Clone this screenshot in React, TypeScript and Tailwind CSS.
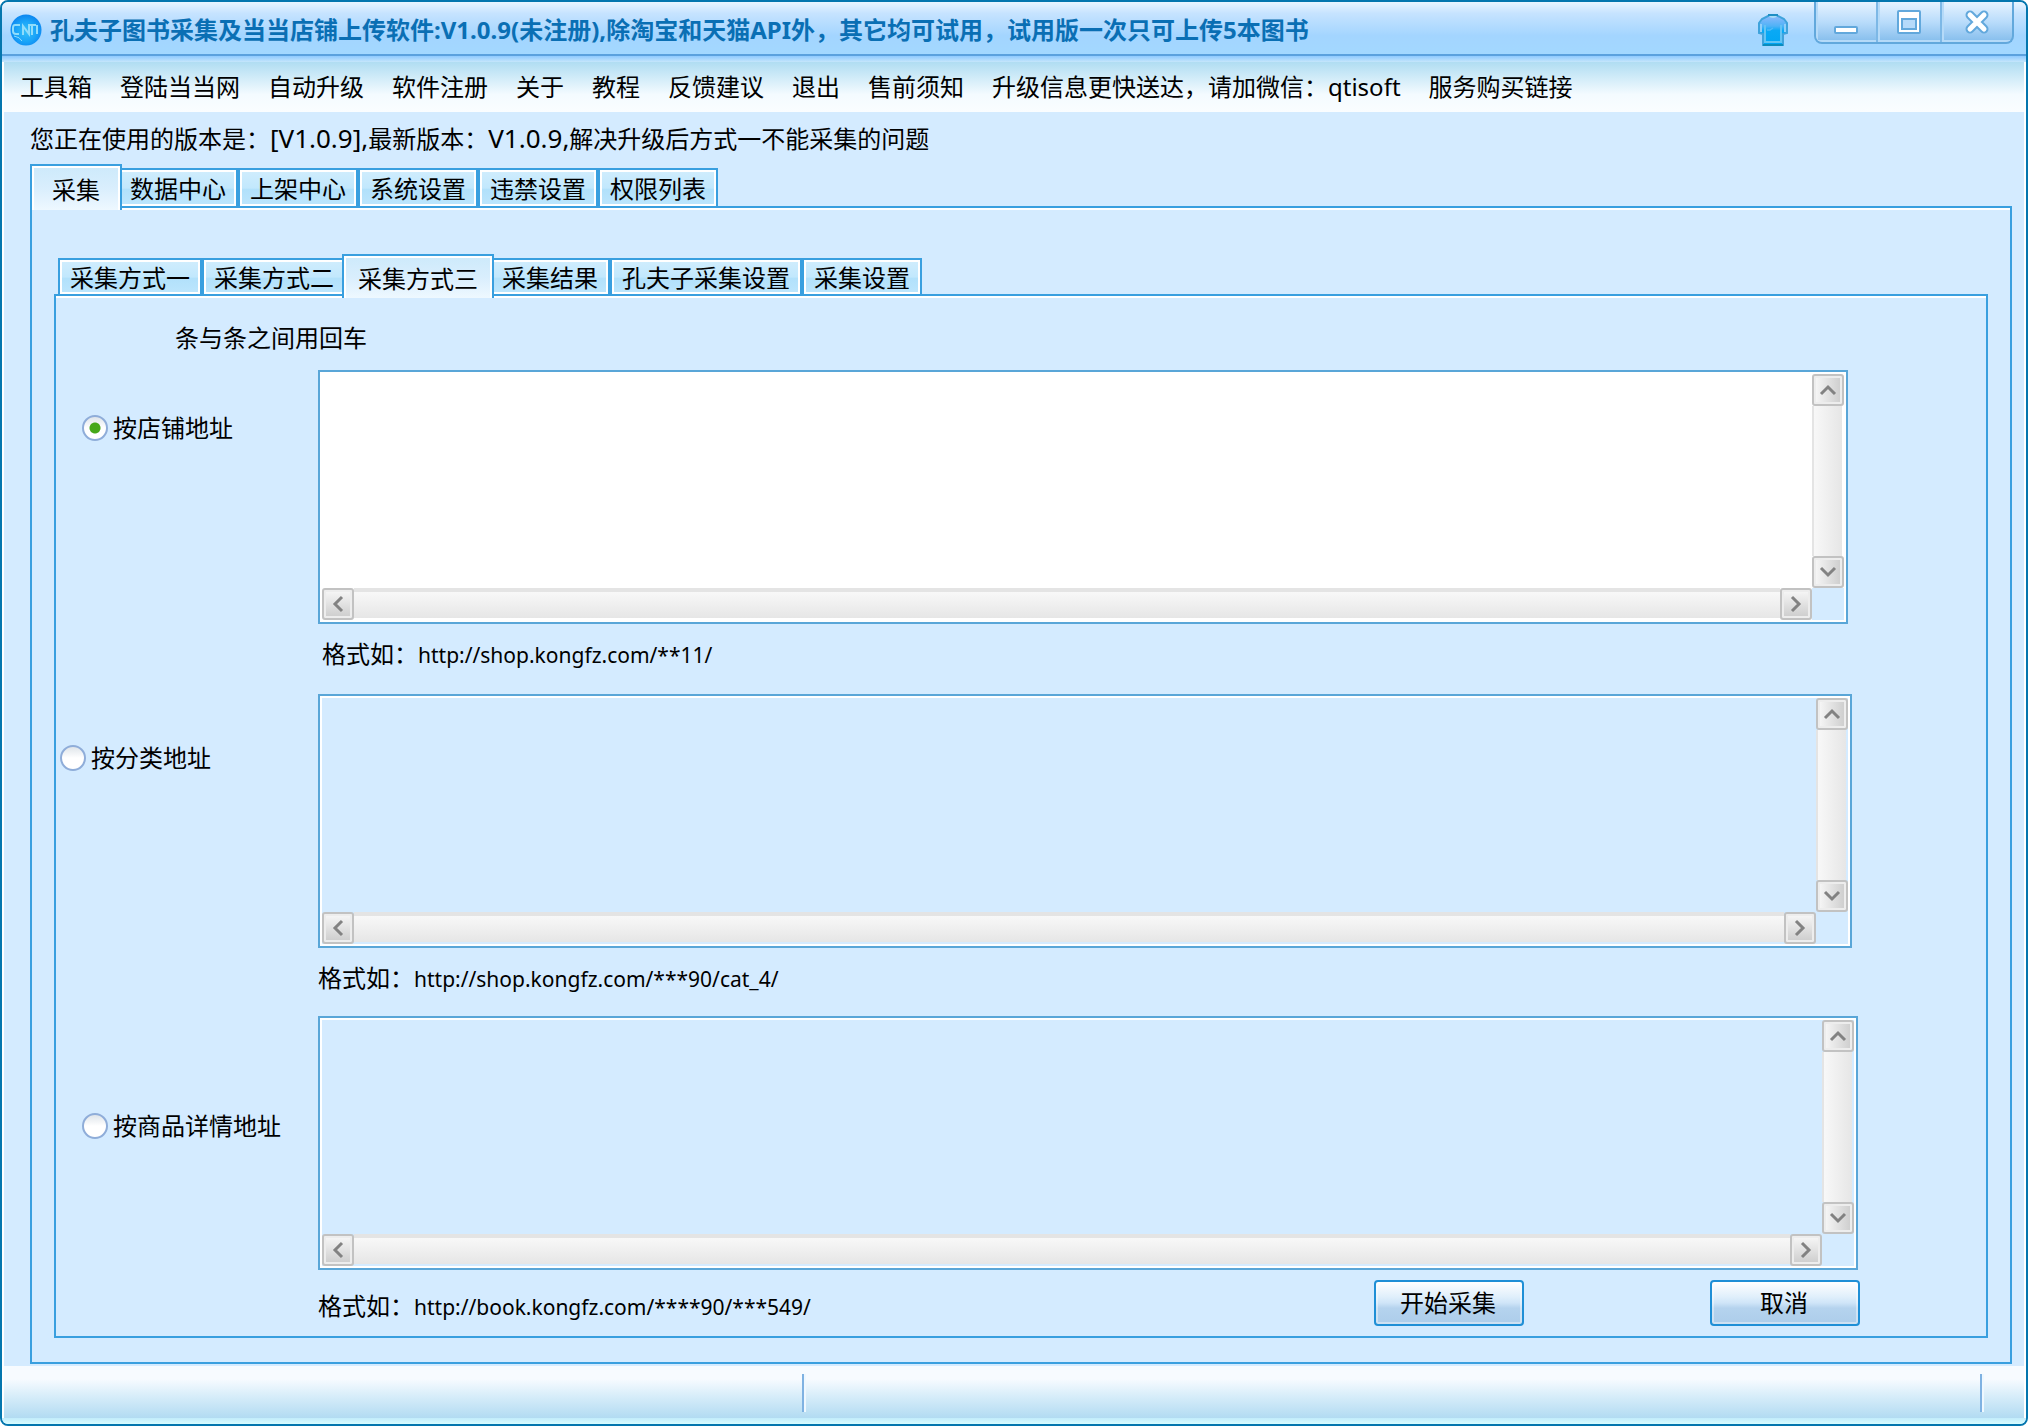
import React, { useState } from "react";

const cjk = "font-['Noto_Sans','Noto_Sans_CJK_SC',sans-serif]";

const menuItems = [
  "工具箱",
  "登陆当当网",
  "自动升级",
  "软件注册",
  "关于",
  "教程",
  "反馈建议",
  "退出",
  "售前须知",
  "升级信息更快送达，请加微信：qtisoft",
  "服务购买链接",
];

const mainTabs = ["采集", "数据中心", "上架中心", "系统设置", "违禁设置", "权限列表"];
const subTabs = ["采集方式一", "采集方式二", "采集方式三", "采集结果", "孔夫子采集设置", "采集设置"];

function Logo() {
  return (
    <svg className="h-8 w-8 shrink-0" viewBox="0 0 32 32" aria-hidden="true">
      <defs>
        <radialGradient id="logo" cx="50%" cy="55%" r="55%">
          <stop offset="0" stopColor="#35c0f8" />
          <stop offset="0.6" stopColor="#1aa4f8" />
          <stop offset="1" stopColor="#0c86f0" />
        </radialGradient>
      </defs>
      <circle cx="16" cy="16" r="15.5" fill="url(#logo)" />
      <g fill="none" stroke="#8fdcfb" strokeWidth="2">
        <path d="M10 11H5q-2 0-2 3v3q0 3 3 3h3" />
        <path d="M13 21v-9l6 8v-9" />
        <path d="M18 11h8M22 11v10M27 11v9" />
        <path d="M4 22q6 1 8 5" strokeWidth="1" />
      </g>
    </svg>
  );
}

function Shirt() {
  return (
    <svg className="h-8 w-[30px]" viewBox="0 0 30 32" aria-hidden="true">
      <defs>
        <linearGradient id="shirt" x1="0" y1="0" x2="0" y2="1">
          <stop offset="0" stopColor="#8db9fb" />
          <stop offset="0.35" stopColor="#4fb2f7" />
          <stop offset="0.5" stopColor="#0aa9f5" />
          <stop offset="1" stopColor="#00a6f4" />
        </linearGradient>
      </defs>
      <path
        d="M10 2H20L26 5L29 9V19L25 20V31H5V20L1 19V9L4 5Z"
        fill="url(#shirt)"
        stroke="#3fa3dc"
        strokeWidth="2"
      />
      <path d="M2 10V18H4V10ZM26 10V18H28V10Z" fill="#8fd0fa" />
      <path d="M7 11V28H23V11" fill="none" stroke="#63c4f4" strokeWidth="2" />
      <path d="M9 16H12L15 14" fill="none" stroke="#4fb9f8" strokeWidth="1.5" />
      <path d="M5 31H25" stroke="#0b8cbc" strokeWidth="2" />
      <path d="M11 1Q15 5 19 1" fill="#1c7fae" stroke="#a8dcf6" strokeWidth="2" />
      <path d="M10 1H20" stroke="#1f8fc4" strokeWidth="2" />
    </svg>
  );
}

function MinimizeIcon() {
  return (
    <svg className="h-6 w-6" viewBox="0 0 24 24" aria-hidden="true">
      <rect x="1" y="17" width="22" height="6" rx="1" fill="#fff" stroke="#62a8dc" strokeWidth="2" />
    </svg>
  );
}

function MaximizeIcon() {
  return (
    <svg className="h-6 w-6" viewBox="0 0 24 24" aria-hidden="true">
      <rect x="1" y="1" width="22" height="22" rx="1" fill="#fff" stroke="#62a8dc" strokeWidth="2" />
      <rect x="5" y="9" width="14" height="10" fill="#b5dafa" stroke="#62a8dc" strokeWidth="2" />
    </svg>
  );
}

function CloseIcon() {
  return (
    <svg className="h-6 w-6" viewBox="0 0 24 24" aria-hidden="true">
      <path d="M5 5L19 19M19 5L5 19" stroke="#62a8dc" strokeWidth="9" strokeLinecap="round" />
      <path d="M5 5L19 19M19 5L5 19" stroke="#fff" strokeWidth="5" strokeLinecap="round" />
    </svg>
  );
}

function TitleBar() {
  return (
    <header className="flex h-[54px] items-start border-b-2 border-[#5ba1de] bg-[linear-gradient(#e9f5ff,#c6e3ff_22%,#a3d5ff_65%,#a3d8ff)] pr-3 pl-2">
      <div className="flex h-12 min-w-0 flex-1 items-center gap-2 pt-2">
        <Logo />
        <h1 className="truncate text-2xl leading-8 font-bold text-[#0a6fb4]">
          孔夫子图书采集及当当店铺上传软件:V1.0.9(未注册),除淘宝和天猫API外，其它均可试用，试用版一次只可上传5本图书
        </h1>
      </div>
      <button type="button" aria-label="换肤" className="mt-3 mr-[26px]">
        <Shirt />
      </button>
      <div className="flex h-[42px] divide-x-2 divide-[#7db8e6] overflow-hidden rounded-b-lg border-2 border-t-0 border-[#62a8dc] bg-[linear-gradient(#e6f3ff,#b9dcfb_50%,#84bdec)]">
        <button type="button" aria-label="最小化" className="flex w-[62px] justify-center pt-2 shadow-[inset_2px_-2px_0_#b5daf8]">
          <MinimizeIcon />
        </button>
        <button type="button" aria-label="最大化" className="flex w-16 justify-center pt-2 shadow-[inset_2px_-2px_0_#b5daf8]">
          <MaximizeIcon />
        </button>
        <button type="button" aria-label="关闭" className="flex w-[70px] justify-center pt-2 shadow-[inset_2px_-2px_0_#b5daf8]">
          <CloseIcon />
        </button>
      </div>
    </header>
  );
}

function Tab({
  label,
  active,
  activeClass,
  idleClass,
  onClick,
}: {
  label: string;
  active: boolean;
  activeClass: string;
  idleClass: string;
  onClick: () => void;
}) {
  return (
    <button
      type="button"
      role="tab"
      aria-selected={active}
      onClick={onClick}
      className={
        active
          ? "relative -mr-1 -mb-1 -ml-1 border-2 border-b-0 border-[#399fdf] bg-[linear-gradient(#cdeafb,#d9eefd_50%,#eef8ff)] whitespace-nowrap shadow-[inset_2px_2px_0_#fff,inset_-2px_0_0_#fff] first:ml-0 " +
            activeClass
          : "border-2 border-b-0 border-[#399fdf] bg-[linear-gradient(#d0edfd,#c2e8fd_50%,#b2e1fb_54%,#bde6fd)] px-2.5 whitespace-nowrap shadow-[inset_2px_2px_0_#fff,inset_-2px_-2px_0_#fff] " +
            idleClass
      }
    >
      {label}
    </button>
  );
}

function ArrowButton({ dir }: { dir: "up" | "down" | "left" | "right" }) {
  const paths = {
    up: "M9 20L16 13L23 20",
    down: "M9 12L16 19L23 12",
    left: "M20 9L13 16L20 23",
    right: "M12 9L19 16L12 23",
  };
  const names = { up: "向上滚动", down: "向下滚动", left: "向左滚动", right: "向右滚动" };
  const vertical = dir === "up" || dir === "down";
  return (
    <button
      type="button"
      aria-label={names[dir]}
      className={
        vertical
          ? "h-8 w-8 shrink-0 rounded-[3px] border-2 border-[#c2c2c2] bg-linear-to-r from-[#f8f8f8] to-[#cccccc] shadow-[inset_0_0_0_2px_#ededed]"
          : "h-8 w-8 shrink-0 rounded-[3px] border-2 border-[#c2c2c2] bg-linear-to-b from-[#f8f8f8] to-[#cccccc] shadow-[inset_0_0_0_2px_#ededed]"
      }
    >
      <svg className="-m-0.5 h-8 w-8" viewBox="0 0 32 32" aria-hidden="true">
        <path d={paths[dir]} fill="none" stroke="#828282" strokeWidth="3" />
      </svg>
    </button>
  );
}

function ScrollBox({ label, enabled }: { label: string; enabled: boolean }) {
  return (
    <div
      className={
        enabled
          ? "grid h-[254px] grid-cols-[1fr_32px] grid-rows-[1fr_32px] border-2 border-[#59a6d8] bg-white p-0.5"
          : "grid h-[254px] grid-cols-[1fr_32px] grid-rows-[1fr_32px] border-2 border-[#59a6d8] bg-[#d4ebff] p-0.5 shadow-[inset_0_0_0_2px_#fff]"
      }
    >
      <textarea
        aria-label={label}
        disabled={!enabled}
        wrap="off"
        className="block h-full w-full resize-none overflow-hidden bg-transparent px-1 outline-none"
      />
      <div className="flex flex-col">
        <ArrowButton dir="up" />
        <div className="mr-0.5 flex-1 border-l-2 border-[#e4e4e4] bg-linear-to-r from-[#f8f8f8] to-[#e6e6e6]" />
        <ArrowButton dir="down" />
      </div>
      <div className="flex">
        <ArrowButton dir="left" />
        <div className="mb-0.5 flex-1 border-t-4 border-[#e4e4e4] bg-linear-to-b from-[#f8f8f8] to-[#e6e6e6]" />
        <ArrowButton dir="right" />
      </div>
      <div className="bg-[#d4ebff]" />
    </div>
  );
}

function ModeRadio({
  label,
  checked,
  onChange,
  className,
}: {
  label: string;
  checked: boolean;
  onChange: () => void;
  className: string;
}) {
  return (
    <label className={"flex items-center gap-[5px] self-start leading-8 whitespace-nowrap " + className}>
      <input
        type="radio"
        name="mode"
        checked={checked}
        onChange={onChange}
        className="h-[26px] w-[26px] shrink-0 appearance-none rounded-full border-2 border-[#8fadd9] bg-[linear-gradient(#dfe5ea,#fff_50%)] checked:bg-[radial-gradient(circle,#46a818_0_5px,transparent_6px),linear-gradient(#dfe5ea,#fff_50%)]"
      />
      {label}
    </label>
  );
}

function Example({ url, className }: { url: string; className: string }) {
  return (
    <p className={"h-8 whitespace-nowrap " + className}>
      格式如：<span className="text-[21px]">{url}</span>
    </p>
  );
}

function PushButton({ children }: { children: React.ReactNode }) {
  return (
    <button
      type="button"
      className="h-[46px] w-[150px] rounded-[4px] border-2 border-[#1f8fd6] bg-[linear-gradient(#fff,#e0effb_35%,#cfe5f8_50%,#b5d3ee_62%,#adcdea)] pr-0.5 shadow-[inset_0_0_0_2px_#ffffff66]"
    >
      {children}
    </button>
  );
}

export default function App() {
  const [mainTab, setMainTab] = useState(0);
  const [subTab, setSubTab] = useState(2);
  const [mode, setMode] = useState(0);

  return (
    <div
      className={
        "flex min-h-screen flex-col overflow-hidden rounded-[8px] border-2 border-[#0476ae] bg-[#d4ebff] text-2xl leading-8 text-black " +
        cjk
      }
    >
      <TitleBar />
      <div className="h-1.5 bg-linear-to-b from-[#8fcaff] to-[#c5e6fb]" />

      <div className="flex flex-1 flex-col border-x-2 border-white">
        <nav className="flex h-[50px] items-center gap-7 bg-[linear-gradient(#b0ddf2,#f4fbff_65%,#fafdff)] pl-4">
          {menuItems.map((m) => (
            <button key={m} type="button" className="whitespace-nowrap">
              {m}
            </button>
          ))}
        </nav>

        <main className="flex flex-1 flex-col pr-3 pl-[26px]">
          <p className="mt-2.5 h-8 whitespace-nowrap">
            您正在使用的版本是：<span className="text-[26px]">[V1.0.9],</span>最新版本：
            <span className="text-[26px]">V1.0.9,</span>解决升级后方式一不能采集的问题
          </p>

          <div role="tablist" className="mt-2.5 flex h-[42px] items-end">
            {mainTabs.map((t, i) => (
              <Tab
                key={t}
                label={t}
                active={i === mainTab}
                activeClass="h-[46px] px-5 pt-1"
                idleClass="h-[38px] pt-0.5"
                onClick={() => setMainTab(i)}
              />
            ))}
          </div>

          <section className="mb-0.5 border-2 border-[#399fdf] px-[22px] pt-[46px] pb-6 shadow-[inset_0_2px_0_#fff]">
            <div role="tablist" className="flex h-10 items-end pl-1">
              {subTabs.map((t, i) => (
                <Tab
                  key={t}
                  label={t}
                  active={i === subTab}
                  activeClass="h-11 px-[14px] pt-1"
                  idleClass="h-9 pt-0.5"
                  onClick={() => setSubTab(i)}
                />
              ))}
            </div>

            <div className="border-2 border-[#399fdf] pb-2.5 shadow-[inset_0_2px_0_#fff]">
              <p className="mt-[26px] ml-[119px]">条与条之间用回车</p>

              <div className="mt-4 grid grid-cols-[262px_1fr] pr-[138px]">
                <ModeRadio className="mt-[42px] ml-[26px]" label="按店铺地址" checked={mode === 0} onChange={() => setMode(0)} />
                <ScrollBox label="店铺地址" enabled={mode === 0} />
                <Example className="col-start-2 mt-[14px] ml-1" url="http://shop.kongfz.com/**11/" />
              </div>

              <div className="mt-6 grid grid-cols-[262px_1fr] pr-[134px]">
                <ModeRadio className="mt-12 ml-1" label="按分类地址" checked={mode === 1} onChange={() => setMode(1)} />
                <ScrollBox label="分类地址" enabled={mode === 1} />
                <Example className="col-start-2 mt-[14px]" url="http://shop.kongfz.com/***90/cat_4/" />
              </div>

              <div className="mt-[22px] grid grid-cols-[262px_1fr] pr-[128px]">
                <ModeRadio className="mt-[94px] ml-[26px]" label="按商品详情地址" checked={mode === 2} onChange={() => setMode(2)} />
                <ScrollBox label="商品详情地址" enabled={mode === 2} />
                <div className="col-start-2 -mr-0.5 mt-2.5 flex">
                  <Example className="mt-2.5 flex-1" url="http://book.kongfz.com/****90/***549/" />
                  <div className="flex gap-[186px]">
                    <PushButton>开始采集</PushButton>
                    <PushButton>取消</PushButton>
                  </div>
                </div>
              </div>
            </div>
          </section>
        </main>

        <footer className="flex h-[52px] bg-[linear-gradient(#f7fbff_25%,#d5ecf9_60%,#b2dbf2)] pt-2 pb-1.5">
          <div className="w-[800px] shrink-0 border-r-2 border-[#7fb2e2] shadow-[2px_0_0_#eef8ff]" />
          <div className="flex-1 border-r-2 border-[#7fb2e2] shadow-[2px_0_0_#eef8ff]" />
          <div className="w-[42px]" />
        </footer>
      </div>
      <div className="h-1.5 bg-linear-to-b from-[#c2ecfb] to-[#d8fdff]" />
    </div>
  );
}
